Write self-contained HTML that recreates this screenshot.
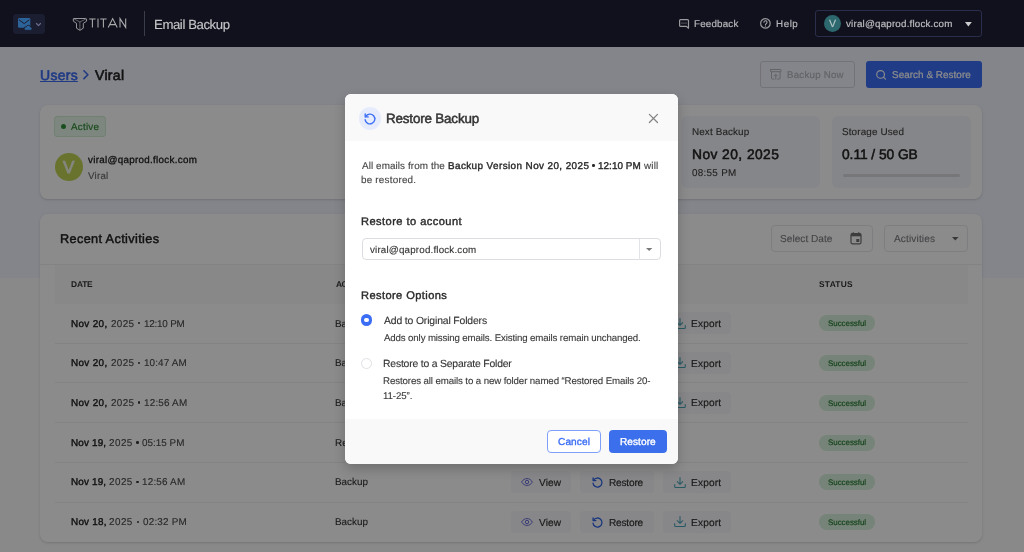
<!DOCTYPE html>
<html><head><meta charset="utf-8">
<style>
*{box-sizing:border-box;margin:0;padding:0}
html,body{width:1024px;height:552px;overflow:hidden}
body{font-family:"Liberation Sans",sans-serif;background:#fbfbfb;position:relative;color:#222}
.a{position:absolute}
svg{position:absolute;overflow:visible}
#hdr{position:absolute;left:0;top:0;width:1024px;height:47px;background:#10111c;z-index:10}
#band{position:absolute;left:0;top:47px;width:1024px;height:231px;background:#f2f4fd}
#ov{position:absolute;left:0;top:47px;width:1024px;height:505px;background:rgba(0,0,0,.455);z-index:5}
#modal{position:absolute;left:0;top:0;width:1024px;height:552px;z-index:20}
.t{position:absolute;white-space:nowrap;line-height:1;will-change:transform;text-rendering:geometricPrecision}
.card{position:absolute;background:#fff;border-radius:8px;box-shadow:0 1px 2px rgba(0,0,0,.10),0 1px 4px rgba(0,0,0,.06)}
.stat{position:absolute;background:#f5f6fb;border-radius:6px}
.btn{position:absolute;background:#f7f8fb;border-radius:4px;height:22px}
.pill{position:absolute;background:#d8f1dc;border-radius:8px;height:16px;width:56px;left:819.3px}
.sep{position:absolute;left:55px;width:913px;height:1px;background:#f1f1f4}
</style></head><body>
<div id="band"></div>

<!-- ================= header ================= -->
<div id="hdr">
  <div class="a" style="left:13.1px;top:14px;width:32px;height:19.6px;border-radius:3px;background:#1b1d31"></div>
  <!-- mail + cloud icon -->
  <svg style="left:18px;top:17.5px" width="14" height="13" viewBox="0 0 14 13">
    <rect x="0" y="0" width="12.3" height="9.8" rx="1.2" fill="#2c6399"/>
    <path d="M1.3 2 L6.15 5.6 L11 2" fill="none" stroke="#1b1d31" stroke-width="1" stroke-linecap="round" stroke-linejoin="round"/>
    <path d="M7.4 12.3 h5 a1.6 1.6 0 0 0 .2 -3.2 a2.3 2.3 0 0 0 -4.4 -.3 a1.8 1.8 0 0 0 -.8 3.5z" fill="#2c6399" stroke="#1b1d31" stroke-width=".9"/>
  </svg>
  <svg style="left:35.9px;top:22.7px" width="5" height="4" viewBox="0 0 5 4"><path d="M.5 .5 L2.5 2.6 L4.5 .5" fill="none" stroke="#6a6a8c" stroke-width="1.2" stroke-linecap="round" stroke-linejoin="round"/></svg>
  <!-- titan mark -->
  <svg style="left:73px;top:17.5px" width="14" height="13" viewBox="0 0 14 13">
    <g fill="none" stroke="#a6a6a9" stroke-linejoin="round" stroke-linecap="round">
      <path stroke-width=".9" d="M1.3 .5 H12.7 L13.55 1.1 V3.2 L10.3 5.4 V10.2 L6.9 12.3 L3.5 10.2 V5.4 L.35 3.2 V1.1 Z"/>
      <path stroke-width=".65" stroke="#8f8f93" d="M1.1 .9 L6.9 4 L12.9 .9 M6.9 4 V12"/>
    </g>
  </svg>
  <!-- TITAN letters -->
  <svg style="left:0;top:0" width="140" height="47" viewBox="0 0 140 47">
    <g fill="none" stroke="#adadb0" stroke-width="1.05" stroke-linecap="butt" stroke-linejoin="miter">
      <path d="M89.2 18.9 H95.6 M92.4 18.9 V27.6"/>
      <path d="M98 18.4 V27.6"/>
      <path d="M100.2 18.9 H106.6 M103.4 18.9 V27.6"/>
      <path d="M108.2 27.6 L112.7 18.6 L117.2 27.6 M109.9 24.6 H115.5"/>
      <path d="M120 27.6 V18.6 L125.7 27.4 V18.4"/>
    </g>
  </svg>
  <div class="a" style="left:144px;top:11px;width:1px;height:25px;background:#3b3c49"></div>
  <!-- feedback icon -->
  <svg style="left:678.6px;top:19px" width="10" height="10" viewBox="0 0 10 10">
    <path d="M1.5 .7 H8.6 a.9 .9 0 0 1 .9 .9 V9.2 L7.4 7.4 H1.5 a.9 .9 0 0 1 -.9 -.9 V1.6 a.9 .9 0 0 1 .9 -.9z" fill="none" stroke="#9a9a9e" stroke-width="1.2" stroke-linejoin="round"/>
    <g fill="#9a9a9e"><rect x="2.5" y="3.6" width="1" height="1"/><rect x="4.5" y="3.6" width="1" height="1"/><rect x="6.5" y="3.6" width="1" height="1"/></g>
  </svg>
  <!-- help icon -->
  <svg style="left:760px;top:18.3px" width="11" height="11" viewBox="0 0 11 11">
    <circle cx="5.4" cy="5.4" r="4.75" fill="none" stroke="#9a9a9e" stroke-width="1.2"/>
    <path d="M3.9 4.3 a1.55 1.55 0 1 1 2.3 1.35 c-.55 .32 -.75 .6 -.75 1.1" fill="none" stroke="#a2a2a6" stroke-width="1.1" stroke-linecap="round"/>
    <circle cx="5.45" cy="8.1" r=".65" fill="#a2a2a6"/>
  </svg>
  <div class="a" style="left:815px;top:10px;width:167px;height:27px;border:1px solid #2b2e4b;border-radius:3px"></div>
  <div class="a" style="left:823.7px;top:15.1px;width:17px;height:17px;border-radius:50%;background:#2c686d"></div>
  <svg style="left:964.7px;top:21.6px" width="7" height="5" viewBox="0 0 7 5"><path d="M0 0 H6.8 L3.4 4.4 Z" fill="#cdcdd0"/></svg>
<div class="t" style="left:153.77px;top:17.60px;font-size:13.2px;font-weight:400;color:#c6c6c9;letter-spacing:-0.417px;-webkit-text-stroke:.15px currentColor;">Email Backup</div>
<div class="t" style="left:694.16px;top:20.11px;font-size:9.8px;font-weight:400;color:#b6b6ba;letter-spacing:0.186px;-webkit-text-stroke:.2px currentColor;">Feedback</div>
<div class="t" style="left:776.36px;top:20.11px;font-size:9.8px;font-weight:400;color:#b6b6ba;letter-spacing:0.558px;-webkit-text-stroke:.2px currentColor;">Help</div>
<div class="t" style="left:846.00px;top:20.21px;font-size:9.8px;font-weight:400;color:#bcbcc0;letter-spacing:0.185px;-webkit-text-stroke:.2px currentColor;">viral@qaprod.flock.com</div>
<div class="t" style="left:828.90px;top:19.41px;font-size:10.6px;font-weight:400;color:#b9c9c9;letter-spacing:0.000px;-webkit-text-stroke:.12px currentColor;">V</div>
</div>

<!-- ================= page ================= -->
<svg style="left:82.8px;top:70px" width="6" height="10" viewBox="0 0 6 10"><path d="M.9 .8 L4.9 4.7 L.9 8.6" fill="none" stroke="#3b6cf2" stroke-width="1.6" stroke-linecap="round" stroke-linejoin="round"/></svg>

<div class="a" style="left:760px;top:61px;width:94.8px;height:26.7px;border:1px solid #d3d4db;border-radius:3px"></div>
<svg style="left:769.5px;top:69.2px" width="12" height="11" viewBox="0 0 12 11">
  <g fill="none" stroke="#b5b6bd" stroke-width="1" stroke-linejoin="round" stroke-linecap="round">
    <rect x=".5" y=".5" width="10.6" height="2.2" rx=".5"/>
    <path d="M1.5 2.9 V9.2 a.9 .9 0 0 0 .9 .9 H4 M10.1 2.9 V9.2 a.9 .9 0 0 1 -.9 .9 H7.6"/>
    <path d="M5.8 10.2 V5.6 M4.2 7 L5.8 5.4 L7.4 7"/>
  </g>
</svg>
<div class="a" style="left:866px;top:61px;width:116.3px;height:26.8px;background:#3c6ff7;border-radius:3px"></div>
<svg style="left:876px;top:69px" width="12" height="12" viewBox="0 0 12 12">
  <circle cx="4.6" cy="5.4" r="3.85" fill="none" stroke="#fff" stroke-width="1.15"/><path d="M7.5 8.2 L9.5 10.1" stroke="#fff" stroke-width="1.15" stroke-linecap="round"/>
</svg>

<!-- summary card -->
<div class="card" style="left:40px;top:105px;width:942px;height:94px"></div>
<div class="a" style="left:54.3px;top:116px;width:51.7px;height:20.5px;background:#e8f7ea;border:1px solid #cdeccf;border-radius:3px"></div>
<div class="a" style="left:60.7px;top:123.7px;width:5.4px;height:5.4px;border-radius:50%;background:#2f9237"></div>
<div class="a" style="left:54.5px;top:153.4px;width:28.1px;height:28.1px;border-radius:50%;background:#c0d455"></div>
<div class="stat" style="left:530px;top:116px;width:139px;height:72px"></div>
<div class="stat" style="left:681px;top:116px;width:139px;height:72px"></div>
<div class="stat" style="left:832px;top:116px;width:138.5px;height:72px"></div>
<div class="a" style="left:842.5px;top:174.2px;width:117px;height:3px;border-radius:2px;background:#dadbe0"></div>

<!-- activities card -->
<div class="card" style="left:40px;top:213.5px;width:942px;height:328px"></div>
<div class="a" style="left:771px;top:224.6px;width:102.4px;height:27.9px;border:1px solid #e7e8eb;border-radius:4px"></div>
<svg style="left:850px;top:232.3px" width="12" height="13" viewBox="0 0 12 13">
  <path d="M2.2 1.7 H9.8 a1.2 1.2 0 0 1 1.2 1.2 V10.6 a1.2 1.2 0 0 1 -1.2 1.2 H2.2 a1.2 1.2 0 0 1 -1.2 -1.2 V2.9 a1.2 1.2 0 0 1 1.2 -1.2z" fill="none" stroke="#707074" stroke-width="1.2"/>
  <rect x="1" y="1.7" width="10" height="2.6" fill="#707074"/>
  <rect x="2.6" y=".3" width="1.3" height="2" fill="#707074"/><rect x="8.1" y=".3" width="1.3" height="2" fill="#707074"/>
  <rect x="6.3" y="7" width="3" height="3" fill="#707074"/>
</svg>
<div class="a" style="left:884px;top:224.6px;width:84px;height:27.9px;border:1px solid #e7e8eb;border-radius:4px"></div>
<svg style="left:952.4px;top:236.6px" width="7" height="4" viewBox="0 0 7 4"><path d="M0 0 H6.6 L3.3 3.6 Z" fill="#68686c"/></svg>

<div class="a" style="left:40px;top:264px;width:942px;height:1px;background:#f0f0f2"></div>
<div class="a" style="left:54.5px;top:265px;width:913.5px;height:38.5px;background:#f9f9fb"></div>
<div class="sep" style="top:342.7px"></div>
<div class="btn" style="left:511.3px;top:312.3px;width:60px"></div>
<div class="btn" style="left:580px;top:312.3px;width:74.3px"></div>
<div class="btn" style="left:663.3px;top:312.3px;width:68px"></div>
<svg style="left:521.1px;top:319.5px" width="12" height="8" viewBox="0 0 12 8"><g fill="none" stroke="#6a6fd8" stroke-width="1"><path d="M.6 4 C2.2 1.5 3.9 .6 6 .6 S9.8 1.5 11.4 4 C9.8 6.5 8.1 7.4 6 7.4 S2.2 6.5 .6 4z"/><circle cx="6" cy="4" r="1.7"/></g></svg>
<svg style="left:591.6px;top:317.8px" width="11" height="11" viewBox="0 0 12 12"><g fill="none" stroke="#2f63e6" stroke-width="1.4" stroke-linecap="round" stroke-linejoin="round"><path d="M1.7 3.6 A4.9 4.9 0 1 1 1.1 6.6"/><path d="M1.2 .9 V3.9 H4.2"/></g></svg>
<svg style="left:673.7px;top:317.7px" width="12" height="11" viewBox="0 0 12 11"><g fill="none" stroke="#46a3b5" stroke-width="1.05" stroke-linecap="round" stroke-linejoin="round"><path d="M6 .6 V7.2 M3.3 4.7 L6 7.3 L8.7 4.7"/><path d="M.7 7.4 V9.4 a1 1 0 0 0 1 1 H10.3 a1 1 0 0 0 1 -1 V7.4"/></g></svg>
<div class="pill" style="top:315.4px"></div>
<div class="sep" style="top:382.4px"></div>
<div class="btn" style="left:511.3px;top:352.0px;width:60px"></div>
<div class="btn" style="left:580px;top:352.0px;width:74.3px"></div>
<div class="btn" style="left:663.3px;top:352.0px;width:68px"></div>
<svg style="left:521.1px;top:359.2px" width="12" height="8" viewBox="0 0 12 8"><g fill="none" stroke="#6a6fd8" stroke-width="1"><path d="M.6 4 C2.2 1.5 3.9 .6 6 .6 S9.8 1.5 11.4 4 C9.8 6.5 8.1 7.4 6 7.4 S2.2 6.5 .6 4z"/><circle cx="6" cy="4" r="1.7"/></g></svg>
<svg style="left:591.6px;top:357.5px" width="11" height="11" viewBox="0 0 12 12"><g fill="none" stroke="#2f63e6" stroke-width="1.4" stroke-linecap="round" stroke-linejoin="round"><path d="M1.7 3.6 A4.9 4.9 0 1 1 1.1 6.6"/><path d="M1.2 .9 V3.9 H4.2"/></g></svg>
<svg style="left:673.7px;top:357.4px" width="12" height="11" viewBox="0 0 12 11"><g fill="none" stroke="#46a3b5" stroke-width="1.05" stroke-linecap="round" stroke-linejoin="round"><path d="M6 .6 V7.2 M3.3 4.7 L6 7.3 L8.7 4.7"/><path d="M.7 7.4 V9.4 a1 1 0 0 0 1 1 H10.3 a1 1 0 0 0 1 -1 V7.4"/></g></svg>
<div class="pill" style="top:355.1px"></div>
<div class="sep" style="top:422.1px"></div>
<div class="btn" style="left:511.3px;top:391.7px;width:60px"></div>
<div class="btn" style="left:580px;top:391.7px;width:74.3px"></div>
<div class="btn" style="left:663.3px;top:391.7px;width:68px"></div>
<svg style="left:521.1px;top:398.9px" width="12" height="8" viewBox="0 0 12 8"><g fill="none" stroke="#6a6fd8" stroke-width="1"><path d="M.6 4 C2.2 1.5 3.9 .6 6 .6 S9.8 1.5 11.4 4 C9.8 6.5 8.1 7.4 6 7.4 S2.2 6.5 .6 4z"/><circle cx="6" cy="4" r="1.7"/></g></svg>
<svg style="left:591.6px;top:397.2px" width="11" height="11" viewBox="0 0 12 12"><g fill="none" stroke="#2f63e6" stroke-width="1.4" stroke-linecap="round" stroke-linejoin="round"><path d="M1.7 3.6 A4.9 4.9 0 1 1 1.1 6.6"/><path d="M1.2 .9 V3.9 H4.2"/></g></svg>
<svg style="left:673.7px;top:397.1px" width="12" height="11" viewBox="0 0 12 11"><g fill="none" stroke="#46a3b5" stroke-width="1.05" stroke-linecap="round" stroke-linejoin="round"><path d="M6 .6 V7.2 M3.3 4.7 L6 7.3 L8.7 4.7"/><path d="M.7 7.4 V9.4 a1 1 0 0 0 1 1 H10.3 a1 1 0 0 0 1 -1 V7.4"/></g></svg>
<div class="pill" style="top:394.8px"></div>
<div class="sep" style="top:461.8px"></div>
<div class="pill" style="top:434.5px"></div>
<div class="sep" style="top:501.6px"></div>
<div class="btn" style="left:511.3px;top:471.2px;width:60px"></div>
<div class="btn" style="left:580px;top:471.2px;width:74.3px"></div>
<div class="btn" style="left:663.3px;top:471.2px;width:68px"></div>
<svg style="left:521.1px;top:478.4px" width="12" height="8" viewBox="0 0 12 8"><g fill="none" stroke="#6a6fd8" stroke-width="1"><path d="M.6 4 C2.2 1.5 3.9 .6 6 .6 S9.8 1.5 11.4 4 C9.8 6.5 8.1 7.4 6 7.4 S2.2 6.5 .6 4z"/><circle cx="6" cy="4" r="1.7"/></g></svg>
<svg style="left:591.6px;top:476.7px" width="11" height="11" viewBox="0 0 12 12"><g fill="none" stroke="#2f63e6" stroke-width="1.4" stroke-linecap="round" stroke-linejoin="round"><path d="M1.7 3.6 A4.9 4.9 0 1 1 1.1 6.6"/><path d="M1.2 .9 V3.9 H4.2"/></g></svg>
<svg style="left:673.7px;top:476.6px" width="12" height="11" viewBox="0 0 12 11"><g fill="none" stroke="#46a3b5" stroke-width="1.05" stroke-linecap="round" stroke-linejoin="round"><path d="M6 .6 V7.2 M3.3 4.7 L6 7.3 L8.7 4.7"/><path d="M.7 7.4 V9.4 a1 1 0 0 0 1 1 H10.3 a1 1 0 0 0 1 -1 V7.4"/></g></svg>
<div class="pill" style="top:474.3px"></div>
<div class="btn" style="left:511.3px;top:511.0px;width:60px"></div>
<div class="btn" style="left:580px;top:511.0px;width:74.3px"></div>
<div class="btn" style="left:663.3px;top:511.0px;width:68px"></div>
<svg style="left:521.1px;top:518.2px" width="12" height="8" viewBox="0 0 12 8"><g fill="none" stroke="#6a6fd8" stroke-width="1"><path d="M.6 4 C2.2 1.5 3.9 .6 6 .6 S9.8 1.5 11.4 4 C9.8 6.5 8.1 7.4 6 7.4 S2.2 6.5 .6 4z"/><circle cx="6" cy="4" r="1.7"/></g></svg>
<svg style="left:591.6px;top:516.5px" width="11" height="11" viewBox="0 0 12 12"><g fill="none" stroke="#2f63e6" stroke-width="1.4" stroke-linecap="round" stroke-linejoin="round"><path d="M1.7 3.6 A4.9 4.9 0 1 1 1.1 6.6"/><path d="M1.2 .9 V3.9 H4.2"/></g></svg>
<svg style="left:673.7px;top:516.4px" width="12" height="11" viewBox="0 0 12 11"><g fill="none" stroke="#46a3b5" stroke-width="1.05" stroke-linecap="round" stroke-linejoin="round"><path d="M6 .6 V7.2 M3.3 4.7 L6 7.3 L8.7 4.7"/><path d="M.7 7.4 V9.4 a1 1 0 0 0 1 1 H10.3 a1 1 0 0 0 1 -1 V7.4"/></g></svg>
<div class="pill" style="top:514.1px"></div>
<div class="a" style="left:137.60px;top:322.00px;width:2.4px;height:2.4px;border-radius:50%;background:#3a3a3a"></div><div class="a" style="left:137.60px;top:361.72px;width:2.4px;height:2.4px;border-radius:50%;background:#3a3a3a"></div><div class="a" style="left:137.60px;top:401.44px;width:2.4px;height:2.4px;border-radius:50%;background:#3a3a3a"></div><div class="a" style="left:136.40px;top:441.16px;width:2.4px;height:2.4px;border-radius:50%;background:#3a3a3a"></div><div class="a" style="left:136.40px;top:480.88px;width:2.4px;height:2.4px;border-radius:50%;background:#3a3a3a"></div><div class="a" style="left:136.80px;top:520.60px;width:2.4px;height:2.4px;border-radius:50%;background:#3a3a3a"></div>
<div class="t" style="left:40.03px;top:67.81px;font-size:14.0px;font-weight:400;color:#3b6cf2;letter-spacing:0.267px;-webkit-text-stroke:.6px currentColor;"><span style="text-decoration:underline;text-decoration-thickness:1.2px;text-underline-offset:.5px">Users</span></div>
<div class="t" style="left:95.00px;top:67.81px;font-size:14.0px;font-weight:400;color:#222;letter-spacing:0.324px;-webkit-text-stroke:.6px currentColor;">Viral</div>
<div class="t" style="left:787.07px;top:71.01px;font-size:9.7px;font-weight:400;color:#b5b6bd;letter-spacing:0.248px;-webkit-text-stroke:.2px currentColor;">Backup Now</div>
<div class="t" style="left:892.16px;top:71.40px;font-size:9.9px;font-weight:400;color:#fff;letter-spacing:0.052px;-webkit-text-stroke:.2px currentColor;">Search &amp; Restore</div>
<div class="t" style="left:70.60px;top:122.80px;font-size:9.8px;font-weight:400;color:#2e8b36;letter-spacing:0.241px;-webkit-text-stroke:.2px currentColor;">Active</div>
<div class="t" style="left:88.10px;top:156.11px;font-size:9.8px;font-weight:400;color:#222;letter-spacing:0.304px;-webkit-text-stroke:.3px currentColor;">viral@qaprod.flock.com</div>
<div class="t" style="left:88.10px;top:171.71px;font-size:9.8px;font-weight:400;color:#666;letter-spacing:0.218px;-webkit-text-stroke:.12px currentColor;">Viral</div>
<div class="t" style="left:63.00px;top:159.30px;font-size:17.0px;font-weight:400;color:#f4f6ea;letter-spacing:0.000px;-webkit-text-stroke:.85px currentColor;">V</div>
<div class="t" style="left:691.96px;top:127.81px;font-size:9.9px;font-weight:400;color:#3d3d3d;letter-spacing:0.124px;-webkit-text-stroke:.12px currentColor;">Next Backup</div>
<div class="t" style="left:691.74px;top:147.61px;font-size:13.8px;font-weight:400;color:#222;letter-spacing:0.439px;-webkit-text-stroke:0.50px currentColor;">Nov 20, 2025</div>
<div class="t" style="left:691.96px;top:169.40px;font-size:9.9px;font-weight:400;color:#3d3d3d;letter-spacing:0.280px;-webkit-text-stroke:.12px currentColor;">08:55 PM</div>
<div class="t" style="left:842.16px;top:127.81px;font-size:9.9px;font-weight:400;color:#3d3d3d;letter-spacing:0.141px;-webkit-text-stroke:.12px currentColor;">Storage Used</div>
<div class="t" style="left:842.14px;top:147.61px;font-size:13.8px;font-weight:400;color:#222;letter-spacing:-0.058px;-webkit-text-stroke:0.50px currentColor;">0.11 / 50 GB</div>
<div class="t" style="left:59.60px;top:233.11px;font-size:12.7px;font-weight:400;color:#222;letter-spacing:0.370px;-webkit-text-stroke:0.46px currentColor;">Recent Activities</div>
<div class="t" style="left:780.24px;top:235.21px;font-size:10.1px;font-weight:400;color:#7d7d82;letter-spacing:0.027px;-webkit-text-stroke:.12px currentColor;">Select Date</div>
<div class="t" style="left:893.80px;top:235.21px;font-size:10.1px;font-weight:400;color:#7d7d82;letter-spacing:0.131px;-webkit-text-stroke:.12px currentColor;">Activities</div>
<div class="t" style="left:71.14px;top:279.91px;font-size:8.4px;font-weight:700;color:#333;letter-spacing:-0.163px;">DATE</div>
<div class="t" style="left:335.50px;top:279.91px;font-size:8.4px;font-weight:700;color:#333;letter-spacing:-0.474px;">ACTIVITY</div>
<div class="t" style="left:819.04px;top:279.91px;font-size:8.4px;font-weight:700;color:#333;letter-spacing:0.286px;">STATUS</div>
<div class="t" style="left:71.16px;top:319.60px;font-size:9.9px;font-weight:400;color:#222;letter-spacing:0.349px;-webkit-text-stroke:.38px currentColor;">Nov 20,</div>
<div class="t" style="left:110.56px;top:319.60px;font-size:9.9px;font-weight:400;color:#4a4a4a;letter-spacing:0.324px;-webkit-text-stroke:.12px currentColor;">2025</div>
<div class="t" style="left:143.86px;top:319.60px;font-size:9.9px;font-weight:400;color:#4a4a4a;letter-spacing:-0.220px;-webkit-text-stroke:.12px currentColor;">12:10 PM</div>
<div class="t" style="left:334.96px;top:319.60px;font-size:9.9px;font-weight:400;color:#333;letter-spacing:0.000px;-webkit-text-stroke:.12px currentColor;">Backup</div>
<div class="t" style="left:539.10px;top:319.91px;font-size:10.1px;font-weight:400;color:#333;letter-spacing:0.100px;-webkit-text-stroke:.2px currentColor;">View</div>
<div class="t" style="left:609.14px;top:319.91px;font-size:10.1px;font-weight:400;color:#333;letter-spacing:-0.197px;-webkit-text-stroke:.2px currentColor;">Restore</div>
<div class="t" style="left:691.34px;top:319.91px;font-size:10.1px;font-weight:400;color:#333;letter-spacing:0.194px;-webkit-text-stroke:.2px currentColor;">Export</div>
<div class="t" style="left:828.36px;top:320.10px;font-size:8.0px;font-weight:400;color:#2a7d33;letter-spacing:-0.070px;-webkit-text-stroke:.2px currentColor;">Successful</div>
<div class="t" style="left:71.16px;top:359.32px;font-size:9.9px;font-weight:400;color:#222;letter-spacing:0.349px;-webkit-text-stroke:.38px currentColor;">Nov 20,</div>
<div class="t" style="left:110.56px;top:359.32px;font-size:9.9px;font-weight:400;color:#4a4a4a;letter-spacing:0.324px;-webkit-text-stroke:.12px currentColor;">2025</div>
<div class="t" style="left:143.86px;top:359.32px;font-size:9.9px;font-weight:400;color:#4a4a4a;letter-spacing:0.129px;-webkit-text-stroke:.12px currentColor;">10:47 AM</div>
<div class="t" style="left:334.96px;top:359.32px;font-size:9.9px;font-weight:400;color:#333;letter-spacing:0.000px;-webkit-text-stroke:.12px currentColor;">Backup</div>
<div class="t" style="left:539.10px;top:359.63px;font-size:10.1px;font-weight:400;color:#333;letter-spacing:0.100px;-webkit-text-stroke:.2px currentColor;">View</div>
<div class="t" style="left:609.14px;top:359.63px;font-size:10.1px;font-weight:400;color:#333;letter-spacing:-0.197px;-webkit-text-stroke:.2px currentColor;">Restore</div>
<div class="t" style="left:691.34px;top:359.63px;font-size:10.1px;font-weight:400;color:#333;letter-spacing:0.194px;-webkit-text-stroke:.2px currentColor;">Export</div>
<div class="t" style="left:828.36px;top:359.82px;font-size:8.0px;font-weight:400;color:#2a7d33;letter-spacing:-0.070px;-webkit-text-stroke:.2px currentColor;">Successful</div>
<div class="t" style="left:71.16px;top:399.04px;font-size:9.9px;font-weight:400;color:#222;letter-spacing:0.349px;-webkit-text-stroke:.38px currentColor;">Nov 20,</div>
<div class="t" style="left:110.56px;top:399.04px;font-size:9.9px;font-weight:400;color:#4a4a4a;letter-spacing:0.324px;-webkit-text-stroke:.12px currentColor;">2025</div>
<div class="t" style="left:143.86px;top:399.04px;font-size:9.9px;font-weight:400;color:#4a4a4a;letter-spacing:0.201px;-webkit-text-stroke:.12px currentColor;">12:56 AM</div>
<div class="t" style="left:334.96px;top:399.04px;font-size:9.9px;font-weight:400;color:#333;letter-spacing:0.000px;-webkit-text-stroke:.12px currentColor;">Backup</div>
<div class="t" style="left:539.10px;top:399.35px;font-size:10.1px;font-weight:400;color:#333;letter-spacing:0.100px;-webkit-text-stroke:.2px currentColor;">View</div>
<div class="t" style="left:609.14px;top:399.35px;font-size:10.1px;font-weight:400;color:#333;letter-spacing:-0.197px;-webkit-text-stroke:.2px currentColor;">Restore</div>
<div class="t" style="left:691.34px;top:399.35px;font-size:10.1px;font-weight:400;color:#333;letter-spacing:0.194px;-webkit-text-stroke:.2px currentColor;">Export</div>
<div class="t" style="left:828.36px;top:399.54px;font-size:8.0px;font-weight:400;color:#2a7d33;letter-spacing:-0.070px;-webkit-text-stroke:.2px currentColor;">Successful</div>
<div class="t" style="left:70.96px;top:438.76px;font-size:9.9px;font-weight:400;color:#222;letter-spacing:0.174px;-webkit-text-stroke:.38px currentColor;">Nov 19,</div>
<div class="t" style="left:109.06px;top:438.76px;font-size:9.9px;font-weight:400;color:#4a4a4a;letter-spacing:0.457px;-webkit-text-stroke:.12px currentColor;">2025</div>
<div class="t" style="left:142.26px;top:438.76px;font-size:9.9px;font-weight:400;color:#4a4a4a;letter-spacing:0.023px;-webkit-text-stroke:.12px currentColor;">05:15 PM</div>
<div class="t" style="left:334.96px;top:438.76px;font-size:9.9px;font-weight:400;color:#333;letter-spacing:0.000px;-webkit-text-stroke:.12px currentColor;">Restore</div>
<div class="t" style="left:828.36px;top:439.26px;font-size:8.0px;font-weight:400;color:#2a7d33;letter-spacing:-0.070px;-webkit-text-stroke:.2px currentColor;">Successful</div>
<div class="t" style="left:70.96px;top:478.49px;font-size:9.9px;font-weight:400;color:#222;letter-spacing:0.174px;-webkit-text-stroke:.38px currentColor;">Nov 19,</div>
<div class="t" style="left:109.06px;top:478.49px;font-size:9.9px;font-weight:400;color:#4a4a4a;letter-spacing:0.457px;-webkit-text-stroke:.12px currentColor;">2025</div>
<div class="t" style="left:142.26px;top:478.49px;font-size:9.9px;font-weight:400;color:#4a4a4a;letter-spacing:0.201px;-webkit-text-stroke:.12px currentColor;">12:56 AM</div>
<div class="t" style="left:334.96px;top:478.49px;font-size:9.9px;font-weight:400;color:#333;letter-spacing:0.000px;-webkit-text-stroke:.12px currentColor;">Backup</div>
<div class="t" style="left:539.10px;top:478.79px;font-size:10.1px;font-weight:400;color:#333;letter-spacing:0.100px;-webkit-text-stroke:.2px currentColor;">View</div>
<div class="t" style="left:609.14px;top:478.79px;font-size:10.1px;font-weight:400;color:#333;letter-spacing:-0.197px;-webkit-text-stroke:.2px currentColor;">Restore</div>
<div class="t" style="left:691.34px;top:478.79px;font-size:10.1px;font-weight:400;color:#333;letter-spacing:0.194px;-webkit-text-stroke:.2px currentColor;">Export</div>
<div class="t" style="left:828.36px;top:478.98px;font-size:8.0px;font-weight:400;color:#2a7d33;letter-spacing:-0.070px;-webkit-text-stroke:.2px currentColor;">Successful</div>
<div class="t" style="left:70.96px;top:518.21px;font-size:9.9px;font-weight:400;color:#222;letter-spacing:0.249px;-webkit-text-stroke:.38px currentColor;">Nov 18,</div>
<div class="t" style="left:109.46px;top:518.21px;font-size:9.9px;font-weight:400;color:#4a4a4a;letter-spacing:0.457px;-webkit-text-stroke:.12px currentColor;">2025</div>
<div class="t" style="left:142.76px;top:518.21px;font-size:9.9px;font-weight:400;color:#4a4a4a;letter-spacing:0.208px;-webkit-text-stroke:.12px currentColor;">02:32 PM</div>
<div class="t" style="left:334.96px;top:518.21px;font-size:9.9px;font-weight:400;color:#333;letter-spacing:0.000px;-webkit-text-stroke:.12px currentColor;">Backup</div>
<div class="t" style="left:539.10px;top:518.51px;font-size:10.1px;font-weight:400;color:#333;letter-spacing:0.100px;-webkit-text-stroke:.2px currentColor;">View</div>
<div class="t" style="left:609.14px;top:518.51px;font-size:10.1px;font-weight:400;color:#333;letter-spacing:-0.197px;-webkit-text-stroke:.2px currentColor;">Restore</div>
<div class="t" style="left:691.34px;top:518.51px;font-size:10.1px;font-weight:400;color:#333;letter-spacing:0.194px;-webkit-text-stroke:.2px currentColor;">Export</div>
<div class="t" style="left:828.36px;top:518.71px;font-size:8.0px;font-weight:400;color:#2a7d33;letter-spacing:-0.070px;-webkit-text-stroke:.2px currentColor;">Successful</div>

<div id="ov"></div>

<!-- ================= modal ================= -->
<div id="modal">
  <div class="a" style="left:345px;top:93.6px;width:333px;height:370px;background:#fff;border-radius:6px;overflow:hidden;box-shadow:0 5px 12px rgba(0,0,0,.2)">
    <div class="a" style="left:0;top:0;width:333px;height:47.4px;background:#f9f9fa"></div>
    <div class="a" style="left:0;top:325.6px;width:333px;height:45px;background:#f9f9fa"></div>
  </div>
  <div class="a" style="left:358.6px;top:107.4px;width:22.3px;height:22.3px;border-radius:50%;background:#e6ecfc"></div>
  <svg style="left:363.6px;top:113.0px" width="12" height="12" viewBox="0 0 12 12">
    <g fill="none" stroke="#3b6ef5" stroke-width="1.35" stroke-linecap="round" stroke-linejoin="round">
      <path d="M1.7 3.6 A4.9 4.9 0 1 1 1.1 6.6"/>
      <path d="M1.2 .9 V3.9 H4.2"/>
    </g>
  </svg>
  <svg style="left:648.6px;top:113.8px" width="9" height="9" viewBox="0 0 9 9"><path d="M.4 .4 L8.5 8.5 M8.5 .4 L.4 8.5" stroke="#858585" stroke-width="1.3" stroke-linecap="round"/></svg>

  <div class="a" style="left:361.5px;top:238.4px;width:299.7px;height:22px;border:1px solid #dcdde2;border-radius:4px"></div>
  <div class="a" style="left:639.4px;top:239px;width:1px;height:21px;background:#e3e4e8"></div>
  <svg style="left:646px;top:248.4px" width="7" height="4" viewBox="0 0 7 4"><path d="M0 0 H6.4 L3.2 3 Z" fill="#7a7a7a"/></svg>

  <div class="a" style="left:360.9px;top:314.3px;width:11.5px;height:11.5px;border-radius:50%;background:#3b6ef5"></div>
  <div class="a" style="left:364.4px;top:317.8px;width:4.5px;height:4.5px;border-radius:50%;background:#fff"></div>
  <div class="a" style="left:360.9px;top:357.5px;width:11.5px;height:11.5px;border-radius:50%;border:1px solid #e0e1e5;background:#fff"></div>

  <div class="a" style="left:546.9px;top:430px;width:54px;height:22.6px;border:1px solid #7ea0f8;border-radius:4px;background:#fff"></div>
  <div class="a" style="left:609px;top:430px;width:58px;height:22.6px;border-radius:4px;background:#3b6fec"></div>
<div class="a" style="left:592.20px;top:164.15px;width:2.6px;height:2.6px;border-radius:50%;background:#2a2a2a"></div>
<div class="t" style="left:386.16px;top:112.00px;font-size:13.4px;font-weight:400;color:#333;letter-spacing:-0.162px;-webkit-text-stroke:0.48px currentColor;">Restore Backup</div>
<div class="t" style="left:361.60px;top:161.76px;font-size:9.9px;font-weight:400;color:#444;letter-spacing:0.088px;-webkit-text-stroke:.12px currentColor;">All emails from the</div>
<div class="t" style="left:447.76px;top:161.76px;font-size:9.9px;font-weight:400;color:#2a2a2a;letter-spacing:0.415px;-webkit-text-stroke:.38px currentColor;">Backup Version Nov 20, 2025</div>
<div class="t" style="left:598.26px;top:161.76px;font-size:9.9px;font-weight:400;color:#2a2a2a;letter-spacing:0.066px;-webkit-text-stroke:.38px currentColor;">12:10 PM</div>
<div class="t" style="left:644.40px;top:161.76px;font-size:9.9px;font-weight:400;color:#444;letter-spacing:0.192px;-webkit-text-stroke:.12px currentColor;">will</div>
<div class="t" style="left:361.06px;top:176.31px;font-size:9.9px;font-weight:400;color:#444;letter-spacing:0.212px;-webkit-text-stroke:.12px currentColor;">be restored.</div>
<div class="t" style="left:360.99px;top:217.01px;font-size:11.1px;font-weight:400;color:#2a2a2a;letter-spacing:0.443px;-webkit-text-stroke:0.40px currentColor;">Restore to account</div>
<div class="t" style="left:369.80px;top:246.11px;font-size:9.8px;font-weight:400;color:#333;letter-spacing:0.175px;-webkit-text-stroke:.12px currentColor;">viral@qaprod.flock.com</div>
<div class="t" style="left:360.89px;top:291.12px;font-size:11.1px;font-weight:400;color:#2a2a2a;letter-spacing:0.406px;-webkit-text-stroke:0.40px currentColor;">Restore Options</div>
<div class="t" style="left:383.90px;top:316.51px;font-size:10.4px;font-weight:400;color:#333;letter-spacing:-0.143px;-webkit-text-stroke:.12px currentColor;">Add to Original Folders</div>
<div class="t" style="left:383.90px;top:334.11px;font-size:9.7px;font-weight:400;color:#3a3a3a;letter-spacing:-0.133px;-webkit-text-stroke:.12px currentColor;">Adds only missing emails. Existing emails remain unchanged.</div>
<div class="t" style="left:383.33px;top:359.71px;font-size:10.4px;font-weight:400;color:#333;letter-spacing:-0.193px;-webkit-text-stroke:.12px currentColor;">Restore to a Separate Folder</div>
<div class="t" style="left:383.37px;top:376.90px;font-size:9.7px;font-weight:400;color:#3a3a3a;letter-spacing:-0.109px;-webkit-text-stroke:.12px currentColor;">Restores all emails to a new folder named “Restored Emails 20-</div>
<div class="t" style="left:383.37px;top:391.51px;font-size:9.7px;font-weight:400;color:#3a3a3a;letter-spacing:-0.094px;-webkit-text-stroke:.12px currentColor;">11-25”.</div>
<div class="t" style="left:557.64px;top:437.80px;font-size:10.1px;font-weight:400;color:#3b6ef5;letter-spacing:0.108px;-webkit-text-stroke:0.36px currentColor;">Cancel</div>
<div class="t" style="left:620.04px;top:437.80px;font-size:10.1px;font-weight:400;color:#fff;letter-spacing:0.053px;-webkit-text-stroke:0.36px currentColor;">Restore</div>
</div>
</body></html>
